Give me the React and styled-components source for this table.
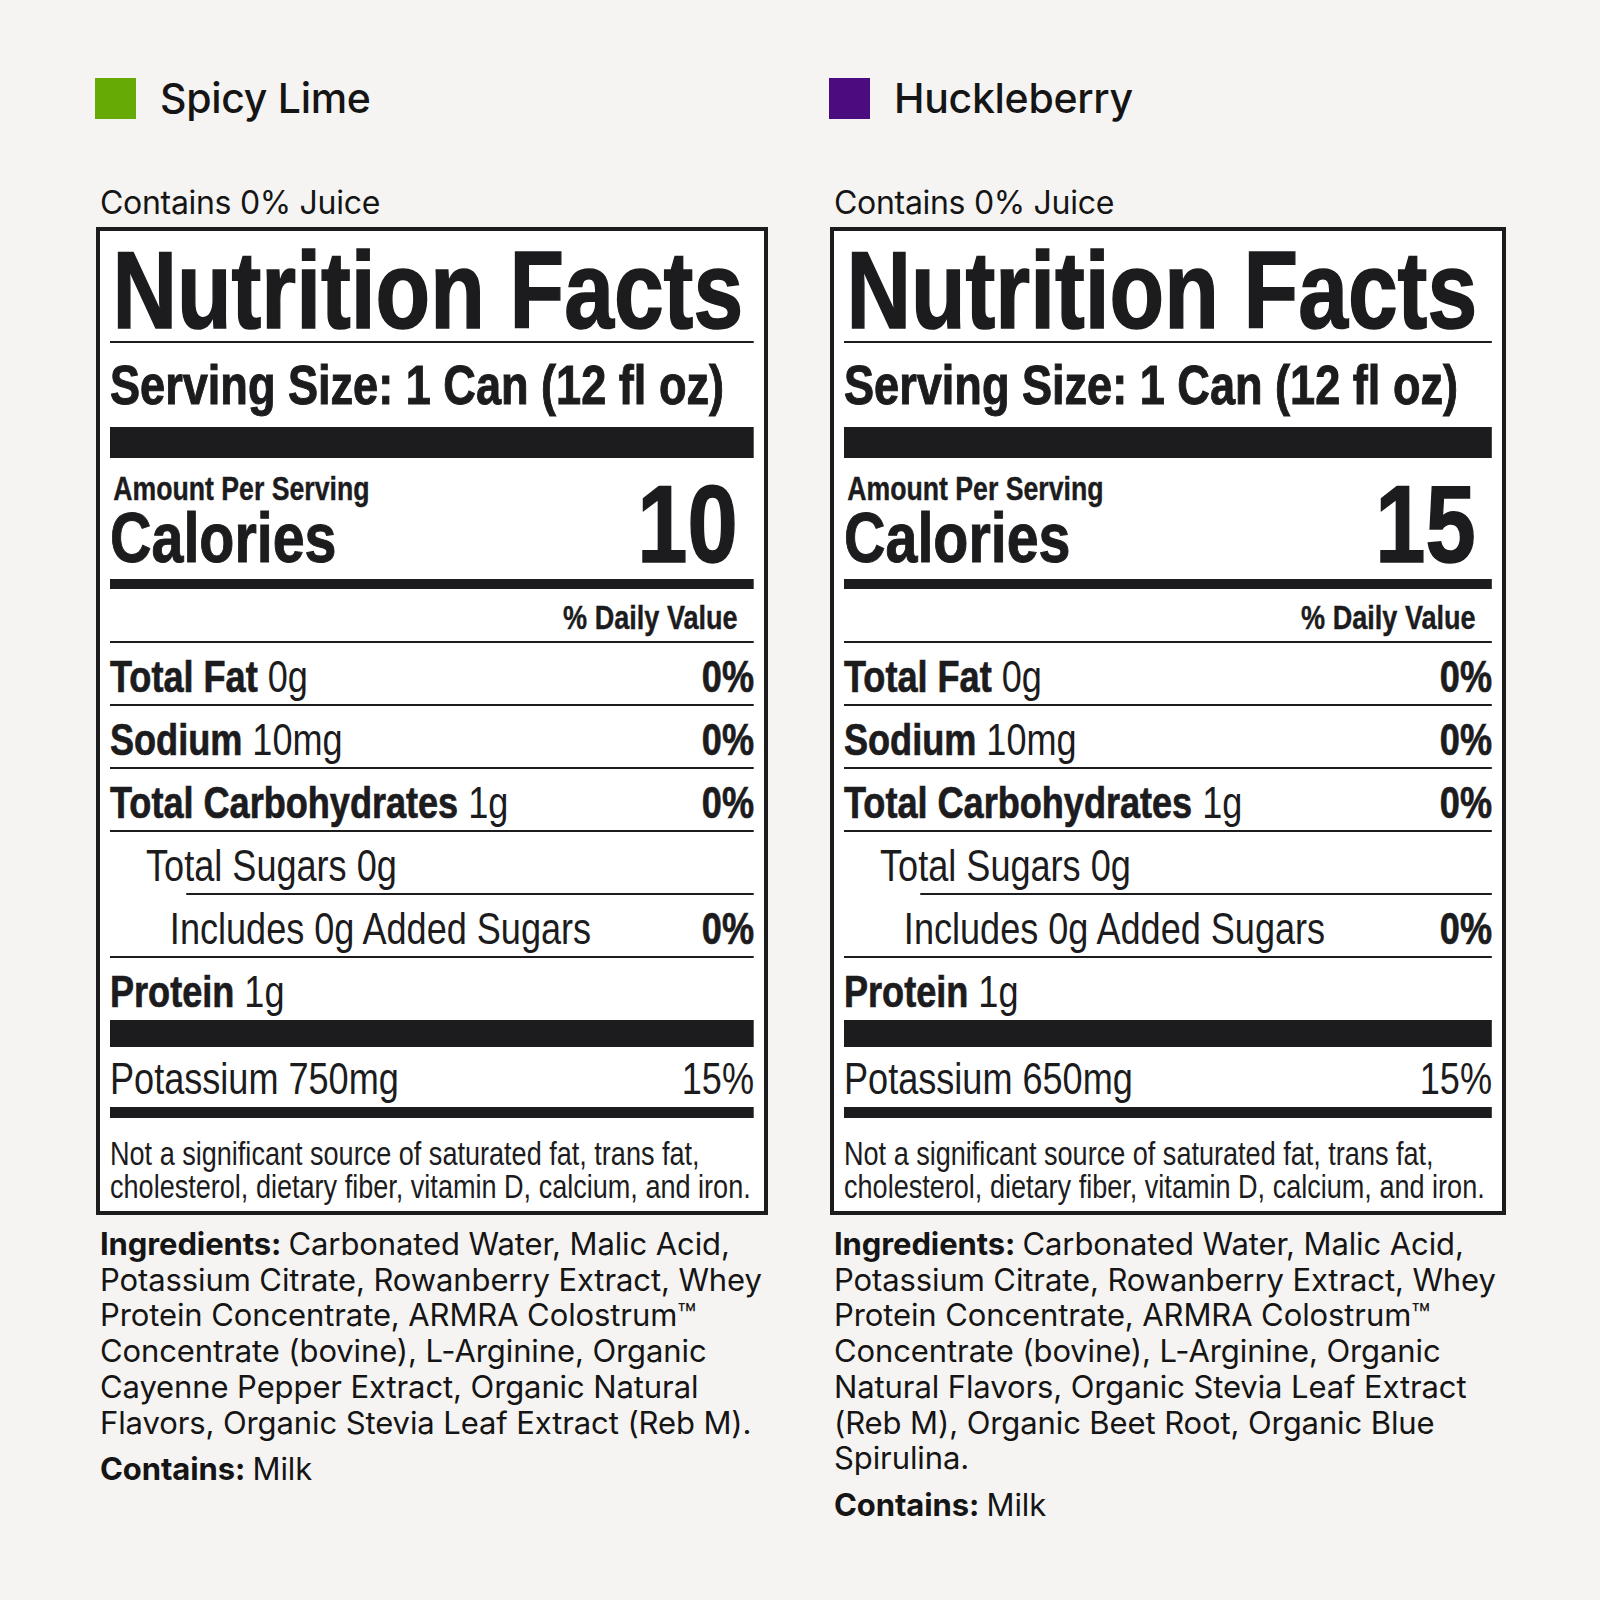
import React from 'react'
import styled, { createGlobalStyle } from 'styled-components'

const INK = '#1c1b1d'
// Arial Narrow is Arial at 82% width; no narrow face is installed, so the
// label body is laid out in Arial units and squeezed horizontally.
const NARROW = 0.82
const LABEL_FONT = '"Liberation Sans", Arial, sans-serif'
const TEXT_FONT = 'Inter, "Liberation Sans", sans-serif'

const FLAVORS = [
  {
    name: 'Spicy Lime',
    color: '#66aa06',
    calories: 10,
    potassium: '750mg',
    ingredients: [
      'Carbonated Water, Malic Acid,',
      'Potassium Citrate, Rowanberry Extract, Whey',
      'Protein Concentrate, ARMRA Colostrum™',
      'Concentrate (bovine), L-Arginine, Organic',
      'Cayenne Pepper Extract, Organic Natural',
      'Flavors, Organic Stevia Leaf Extract (Reb M).',
    ],
  },
  {
    name: 'Huckleberry',
    color: '#4b0c80',
    calories: 15,
    potassium: '650mg',
    ingredients: [
      'Carbonated Water, Malic Acid,',
      'Potassium Citrate, Rowanberry Extract, Whey',
      'Protein Concentrate, ARMRA Colostrum™',
      'Concentrate (bovine), L-Arginine, Organic',
      'Natural Flavors, Organic Stevia Leaf Extract',
      '(Reb M), Organic Beet Root, Organic Blue',
      'Spirulina.',
    ],
  },
]

// indents are in unsqueezed label units
const ROWS = [
  { bold: 'Total Fat', amount: '0g', dv: '0%' },
  { bold: 'Sodium', amount: '10mg', dv: '0%' },
  { bold: 'Total Carbohydrates', amount: '1g', dv: '0%' },
  { amount: 'Total Sugars 0g', indent: 44, ruleIndent: 93 },
  { amount: 'Includes 0g Added Sugars', dv: '0%', indent: 73 },
  { bold: 'Protein', amount: '1g', last: true },
]

const GlobalStyle = createGlobalStyle`
  html, body {
    margin: 0;
    padding: 0;
    background: #f5f4f2;
  }
`

const Page = styled.div`
  width: 1600px;
  height: 1600px;
  box-sizing: border-box;
  padding: 78px 0 0 96px;
  display: grid;
  grid-template-columns: 672px 676px;
  column-gap: 62px;
  align-items: start;
  background: #f5f4f2;
  color: #151515;
`

const Column = styled.div`
  display: flex;
  flex-direction: column;
`

const Header = styled.div`
  display: flex;
  align-items: center;
  gap: 24px;
  height: 41px;
  margin-left: -1px;
`

const Swatch = styled.div`
  width: 41px;
  height: 41px;
  background: ${p => p.$color};
`

const FlavorName = styled.div`
  font-family: ${TEXT_FONT};
  font-weight: 500;
  font-size: 41px;
  line-height: 41px;
  letter-spacing: -0.3px;
`

const Juice = styled.div`
  margin: 68px 0 8px 4px;
  font-family: ${TEXT_FONT};
  font-size: 32px;
  line-height: 32px;
  letter-spacing: -0.3px;
`

const Label = styled.div`
  border: 4px solid ${INK};
  background: #fff;
  padding: 0 10px;
  color: ${INK};
  font-family: ${LABEL_FONT};
`

const LabelBody = styled.div`
  width: ${100 / NARROW}%;
  transform: scaleX(${NARROW});
  transform-origin: 0 0;
`

const Rule = styled.div`
  height: ${p => p.$h || 2}px;
  margin-left: ${p => p.$indent || 0}px;
  background: ${INK};
`

const Heavy = styled.div`
  font-weight: 700;
  -webkit-text-stroke: ${p => p.$stroke || 0.8}px ${INK};
`

const Title = styled(Heavy)`
  padding: 9px 0 1px 3px;
  font-size: 109px;
  line-height: 100px;
  white-space: nowrap;
`

const Serving = styled(Heavy)`
  padding: 15px 0 14px 0;
  font-size: 55px;
  line-height: 55px;
  white-space: nowrap;
`

const CalBlock = styled.div`
  display: flex;
  justify-content: space-between;
  align-items: flex-end;
  padding: 15px 20px 8px 0;
`

const CalLeft = styled.div`
  display: flex;
  flex-direction: column;
`

const Amount = styled(Heavy)`
  padding-left: 4px;
  font-size: 32.5px;
  line-height: 32px;
  white-space: nowrap;
`

const CalLabel = styled(Heavy)`
  font-size: 70px;
  line-height: 66px;
`

const CalValue = styled(Heavy)`
  font-size: 110px;
  line-height: 94px;
`

const DailyHead = styled(Heavy)`
  padding: 12px 20px 6px 0;
  text-align: right;
  font-size: 33px;
  line-height: 34px;
`

const Row = styled.div`
  display: flex;
  justify-content: space-between;
  height: ${p => p.$h || 61}px;
  box-sizing: border-box;
  padding: ${p => p.$pt || 12}px 0 0 ${p => p.$indent || 0}px;
  font-size: 44px;
  line-height: 44px;
  white-space: nowrap;
`

const Nutrient = styled.span`
  b {
    font-weight: 700;
    -webkit-text-stroke: 0.7px ${INK};
  }
`

const Percent = styled.span`
  font-weight: ${p => (p.$light ? 400 : 700)};
  -webkit-text-stroke: ${p => (p.$light ? 0 : 0.7)}px ${INK};
`

const Footnote = styled.div`
  padding: 19px 0 8px 0;
  font-size: 33px;
  line-height: 33px;
  white-space: nowrap;
`

const Ingredients = styled.div`
  margin: 11px 0 0 4px;
  font-family: ${TEXT_FONT};
  font-size: 31px;
  line-height: 35.7px;
  letter-spacing: -0.1px;
  white-space: nowrap;

  b {
    font-weight: 700;
  }
`

const Allergen = styled(Ingredients)`
  margin-top: 11px;
`

const NutritionLabel = ({ flavor }) => (
  <Label>
    <LabelBody>
      <Title $stroke={1.6}>Nutrition Facts</Title>
      <Rule />
      <Serving $stroke={1}>Serving Size: 1 Can (12 fl oz)</Serving>
      <Rule $h={31} />
      <CalBlock>
        <CalLeft>
          <Amount $stroke={0.4}>Amount Per Serving</Amount>
          <CalLabel $stroke={1}>Calories</CalLabel>
        </CalLeft>
        <CalValue $stroke={1.6}>{flavor.calories}</CalValue>
      </CalBlock>
      <Rule $h={10} />
      <DailyHead $stroke={0.4}>% Daily Value</DailyHead>
      <Rule />
      {ROWS.map(row => (
        <React.Fragment key={row.amount}>
          <Row $indent={row.indent} $h={row.last ? 62 : 61}>
            <Nutrient>
              {row.bold && <b>{row.bold} </b>}
              {row.amount}
            </Nutrient>
            {row.dv && <Percent>{row.dv}</Percent>}
          </Row>
          {!row.last && <Rule $indent={row.ruleIndent} />}
        </React.Fragment>
      ))}
      <Rule $h={27} />
      <Row $h={60} $pt={10}>
        <Nutrient>Potassium {flavor.potassium}</Nutrient>
        <Percent $light>15%</Percent>
      </Row>
      <Rule $h={11} />
      <Footnote>
        Not a significant source of saturated fat, trans fat,
        <br />
        cholesterol, dietary fiber, vitamin D, calcium, and iron.
      </Footnote>
    </LabelBody>
  </Label>
)

const FlavorColumn = ({ flavor }) => (
  <Column>
    <Header>
      <Swatch $color={flavor.color} />
      <FlavorName>{flavor.name}</FlavorName>
    </Header>
    <Juice>Contains 0% Juice</Juice>
    <NutritionLabel flavor={flavor} />
    <Ingredients>
      {flavor.ingredients.map((line, i) => (
        <div key={i}>
          {i === 0 && <b>Ingredients: </b>}
          {line}
        </div>
      ))}
    </Ingredients>
    <Allergen>
      <b>Contains: </b>Milk
    </Allergen>
  </Column>
)

const App = () => (
  <>
    <GlobalStyle />
    <Page>
      {FLAVORS.map(f => (
        <FlavorColumn key={f.name} flavor={f} />
      ))}
    </Page>
  </>
)

export default App
